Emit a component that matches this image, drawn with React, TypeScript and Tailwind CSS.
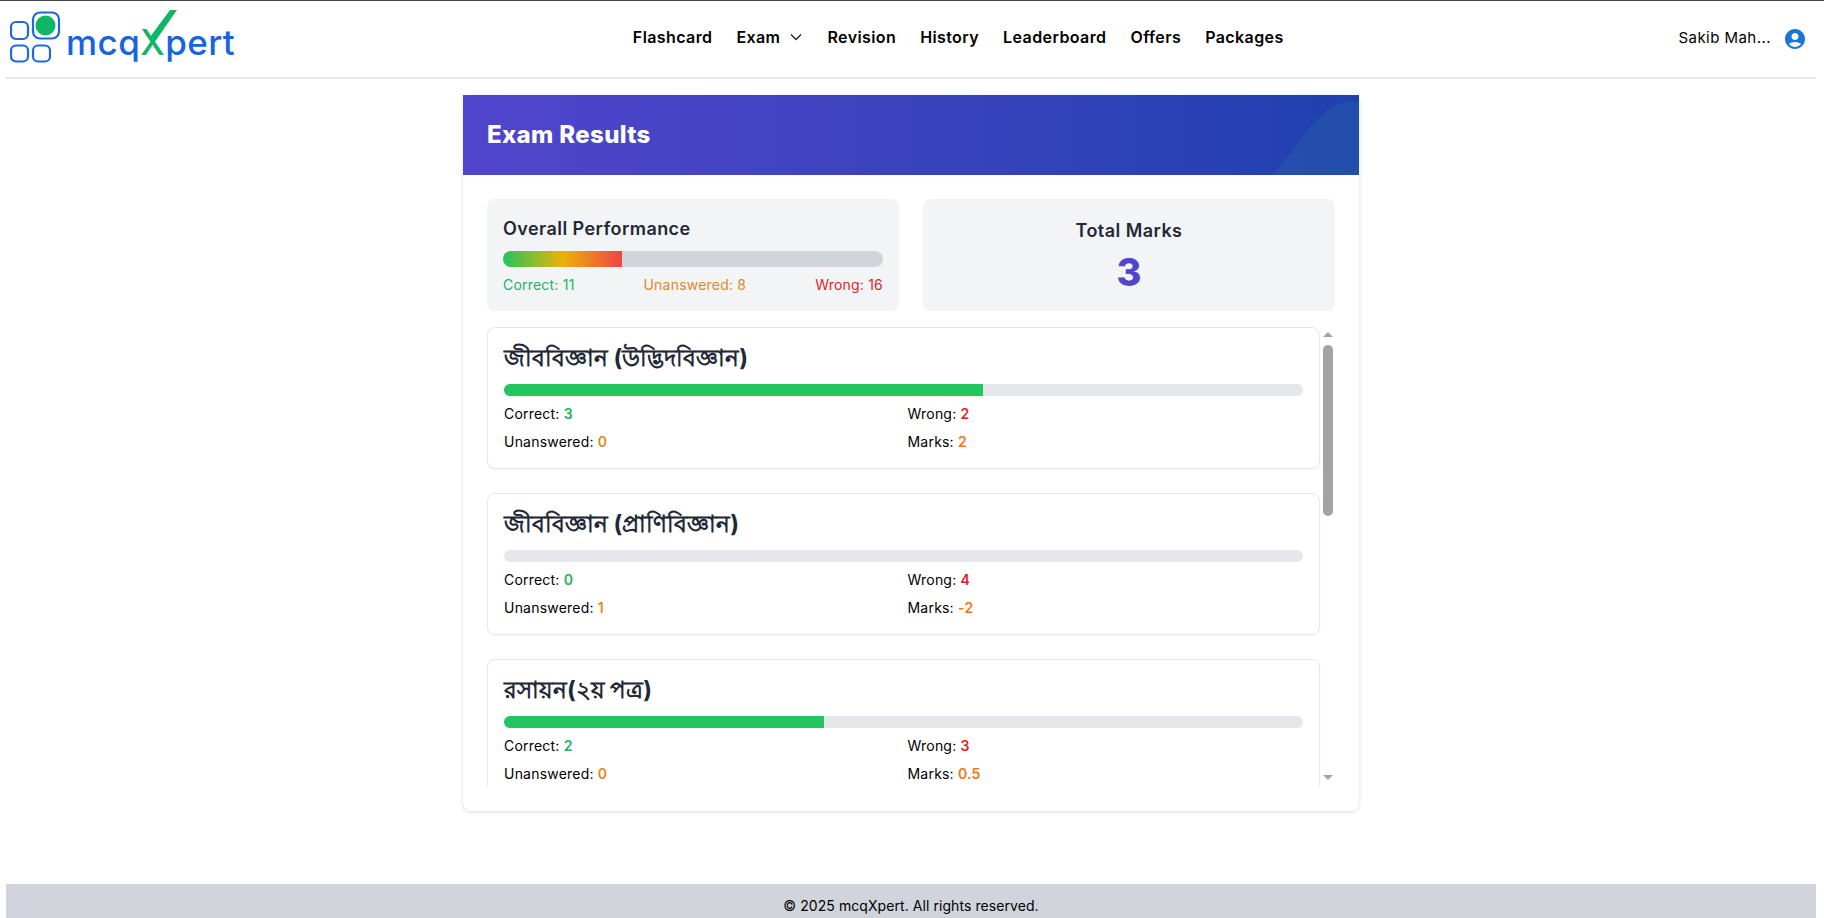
const SANS = "font-['Inter','Noto_Sans','Liberation_Sans',sans-serif]"

const NAV = ['Flashcard', 'Exam', 'Revision', 'History', 'Leaderboard', 'Offers', 'Packages']

const SUBJECTS = [
  { name: 'জীববিজ্ঞান (উদ্ভিদবিজ্ঞান)', pct: '60%', correct: 3, wrong: 2, blank: 0, marks: '2' },
  { name: 'জীববিজ্ঞান (প্রাণিবিজ্ঞান)', pct: '0%', correct: 0, wrong: 4, blank: 1, marks: '-2' },
  { name: 'রসায়ন(২য় পত্র)', pct: '40%', correct: 2, wrong: 3, blank: 0, marks: '0.5' },
]

function Logo() {
  return (
    <div className="flex items-start">
      <svg width="60" height="52" viewBox="0 0 60 52" className="mt-[10px] shrink-0">
        <g fill="none" stroke="#1f68e0" strokeWidth="2.2">
          <rect x="1" y="11" width="17" height="17" rx="5" />
          <rect x="23" y="1.5" width="26" height="26" rx="7" />
          <rect x="1" y="34.5" width="17" height="16" rx="5" />
          <rect x="23" y="34.5" width="17" height="16" rx="5" />
        </g>
        <circle cx="35.5" cy="14.5" r="10" fill="#0fb765" />
      </svg>
      <div className="ml-[-4px] mt-[21px] flex text-[35px] leading-[40px] font-medium tracking-[0.012em] text-[#1565e0]">
        <span>mcq</span>
        <span className="relative text-[#0fb765]">
          X
          <svg width="30" height="30" viewBox="0 0 30 30" className="absolute left-[10px] top-[-12px]">
            <polygon points="0,27 20,0 27,0 6,30" fill="#0fb765" />
          </svg>
        </span>
        <span>pert</span>
      </div>
    </div>
  )
}

function Header() {
  return (
    <header className="mx-[6px] mr-[8px] flex h-[78px] shrink-0 items-center justify-between border-b-2 border-[#e5e7eb]">
      <div className="w-[240px] self-start pl-[4px]">
        <Logo />
      </div>
      <nav className="mb-[5px] ml-[-8px] flex items-center gap-6 text-base font-semibold tracking-[0.025em] text-black">
        {NAV.map(item => (
          <a key={item} className="flex items-center gap-[9px]">
            {item}
            {item === 'Exam' && (
              <svg width="14" height="14" viewBox="0 0 14 14" fill="none" stroke="#222" strokeWidth="1.3">
                <path d="M2 4.5 7 9.5 12 4.5" />
              </svg>
            )}
          </a>
        ))}
      </nav>
      <div className="mb-[1px] flex items-center gap-3 pr-[9px] text-[15px] tracking-[0.03em] text-black">
        <span>Sakib Mah...</span>
        <svg width="24" height="24" viewBox="0 0 24 24" fill="#1976d2">
          <path d="M12 2C6.48 2 2 6.48 2 12s4.48 10 10 10 10-4.48 10-10S17.52 2 12 2zm0 4c1.93 0 3.5 1.57 3.5 3.5S13.93 13 12 13s-3.5-1.57-3.5-3.5S10.07 6 12 6zm0 14c-2.03 0-4.43-.82-6.14-2.88C7.55 15.8 9.68 15 12 15s4.45.8 6.14 2.12C16.43 19.18 14.03 20 12 20z" />
        </svg>
      </div>
    </header>
  )
}

function Overall() {
  return (
    <div className="rounded-lg bg-[#f3f4f6] p-4">
      <h3 className="mb-2 text-lg leading-7 font-semibold tracking-[0.025em] text-[#1f2937]">Overall Performance</h3>
      <div className="h-4 overflow-hidden rounded-full bg-[#d1d5db]">
        <div className="h-full w-[31.4%] bg-linear-to-r/srgb from-[#22c55e] via-[#eab308] to-[#ef4444]" />
      </div>
      <div className="mt-2 flex justify-between text-sm tracking-[0.015em]">
        <span className="text-[#22b35e]">Correct: 11</span>
        <span className="text-[#e08a1e]">Unanswered: 8</span>
        <span className="text-[#dc2626]">Wrong: 16</span>
      </div>
    </div>
  )
}

function TotalMarks() {
  return (
    <div className="flex flex-col items-center rounded-lg bg-[#f3f4f6] p-4 pt-[18px]">
      <h3 className="text-lg leading-7 font-semibold tracking-[0.025em] text-[#1f2937]">Total Marks</h3>
      <div className="mt-[7px] text-[38px] leading-10 font-extrabold text-[#4f46cf]">3</div>
    </div>
  )
}

function SubjectCard({ s }: { s: (typeof SUBJECTS)[number] }) {
  return (
    <div className="rounded-lg border border-[#e5e7eb] p-4 shadow-xs">
      <h4 className="mb-3 text-[23.4px] leading-7 font-bold text-[#1f2937]">{s.name}</h4>
      <div className="h-3 overflow-hidden rounded-full bg-[#e5e7eb]">
        <div className="h-full bg-[#22c55e]" style={{ width: s.pct }} />
      </div>
      <div className="mt-2 grid grid-cols-2 gap-2 text-sm tracking-[0.015em] text-black">
        <p>Correct: <b className="font-semibold text-[#22b35e]">{s.correct}</b></p>
        <p>Wrong: <b className="font-semibold text-[#dc2626]">{s.wrong}</b></p>
        <p>Unanswered: <b className="font-semibold text-[#e08a1e]">{s.blank}</b></p>
        <p>Marks: <b className="font-semibold text-[#f97316]">{s.marks}</b></p>
      </div>
    </div>
  )
}

function Scrollbar() {
  return (
    <div className="flex w-[15px] shrink-0 flex-col items-center pl-[1px] pt-[5px]">
      <div className="h-0 w-0 border-x-[5px] border-b-[5px] border-x-transparent border-b-[#a3a3a3]" />
      <div className="mt-[8px] h-[171px] w-[10px] shrink-0 rounded-full bg-[#a3a3a3]" />
      <div className="mt-[259px] h-0 w-0 border-x-[5px] border-t-[5px] border-x-transparent border-t-[#a3a3a3]" />
    </div>
  )
}

export default function App() {
  return (
    <div className={`flex h-screen flex-col overflow-hidden border-t border-[#444] bg-white ${SANS}`}>
      <Header />
      <main className="flex flex-1 justify-center pr-[2px] pt-[16px]">
        <div className="h-[716px] w-[896px] rounded-lg bg-white shadow-[0_1px_4px_rgba(0,0,0,0.14)]">
          <div className="relative flex h-[80px] items-center overflow-hidden bg-gradient-to-r from-[#5145cd] to-[#1e40af] px-6">
            <h2 className="text-2xl font-extrabold tracking-[0.015em] text-white">Exam Results</h2>
            <svg width="90" height="80" viewBox="0 0 90 80" className="absolute right-0 top-0">
              <path d="M4 80C30 50 50 10 80 6Q86 5 90 8V80Z" fill="#2f7f9f" fillOpacity="0.22" />
            </svg>
          </div>
          <div className="p-6">
            <div className="mb-4 grid grid-cols-2 gap-6">
              <Overall />
              <TotalMarks />
            </div>
            <div className="flex h-[460px] overflow-hidden">
              <div className="flex-1 space-y-6">
                {SUBJECTS.map(s => (
                  <SubjectCard key={s.name} s={s} />
                ))}
              </div>
              <Scrollbar />
            </div>
          </div>
        </div>
      </main>
      <footer className="ml-[6px] mr-[8px] h-[34px] shrink-0 bg-[#d1d5db] pt-3 text-center text-sm tracking-[0.005em] text-black">
        © 2025 mcqXpert. All rights reserved.
      </footer>
    </div>
  )
}
